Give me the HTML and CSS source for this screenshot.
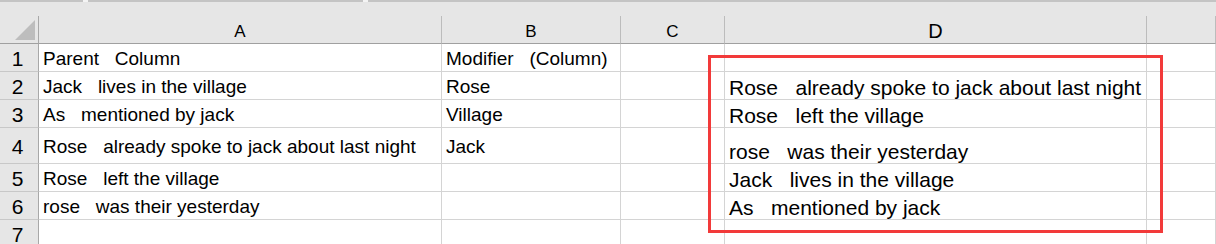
FILE: index.html
```html
<!DOCTYPE html>
<html>
<head>
<meta charset="utf-8">
<link rel="stylesheet" href="styles.css">
</head>
<body>
<div class="sheet">
  <div class="topbar">
    <div class="rule">
      <span class="seg seg-a"></span>
      <span class="seg seg-b"></span>
      <span class="seg seg-c"></span>
    </div>
  </div>
  <div class="grid">
    <div class="corner">
      <svg width="38" height="27" viewBox="0 0 38 27"><polygon points="15,24 35,24 35,4" fill="#bdbdbd"/></svg>
    </div>
    <div class="colhead">A</div>
    <div class="colhead">B</div>
    <div class="colhead">C</div>
    <div class="colhead colhead-d">D</div>
    <div class="colhead"></div>

    <div class="rowhead">1</div>
    <div class="cell">Parent   Column</div>
    <div class="cell">Modifier   (Column)</div>
    <div class="cell"></div>
    <div class="cell cell-d"></div>
    <div class="cell"></div>

    <div class="rowhead">2</div>
    <div class="cell">Jack   lives in the village</div>
    <div class="cell">Rose</div>
    <div class="cell"></div>
    <div class="cell cell-d">Rose   already spoke to jack about last night</div>
    <div class="cell"></div>

    <div class="rowhead">3</div>
    <div class="cell">As   mentioned by jack</div>
    <div class="cell">Village</div>
    <div class="cell"></div>
    <div class="cell cell-d">Rose   left the village</div>
    <div class="cell"></div>

    <div class="rowhead">4</div>
    <div class="cell">Rose   already spoke to jack about last night</div>
    <div class="cell">Jack</div>
    <div class="cell"></div>
    <div class="cell cell-d">rose   was their yesterday</div>
    <div class="cell"></div>

    <div class="rowhead">5</div>
    <div class="cell">Rose   left the village</div>
    <div class="cell"></div>
    <div class="cell"></div>
    <div class="cell cell-d">Jack   lives in the village</div>
    <div class="cell"></div>

    <div class="rowhead">6</div>
    <div class="cell">rose   was their yesterday</div>
    <div class="cell"></div>
    <div class="cell"></div>
    <div class="cell cell-d">As   mentioned by jack</div>
    <div class="cell"></div>

    <div class="rowhead">7</div>
    <div class="cell"></div>
    <div class="cell"></div>
    <div class="cell"></div>
    <div class="cell cell-d"></div>
    <div class="cell"></div>
  </div>
  <div class="highlight"></div>
</div>
</body>
</html>
```
FILE: styles.css
```css
* {
  box-sizing: border-box;
}

html, body {
  margin: 0;
  padding: 0;
  background: #ffffff;
}

body {
  width: 1216px;
  height: 244px;
  overflow: hidden;
  font-family: "Liberation Sans", Arial, sans-serif;
  color: #000000;
}

.sheet {
  position: relative;
  width: 1216px;
  height: 244px;
  overflow: hidden;
}

.topbar {
  height: 16px;
  background: #e6e6e6;
}

.rule {
  display: flex;
  gap: 5px;
  height: 2px;
  background: #f4f4f4;
}

.seg {
  display: block;
  height: 2px;
  background: #c4c4c4;
}

.seg-a { width: 83px; }
.seg-b { width: 275px; }
.seg-c { flex: 1; }

.grid {
  display: grid;
  grid-template-columns: 39px 403px 179px 104px 422px 1fr;
  grid-template-rows: 28px 28px 28px 28px 36px 28px 28px 28px;
}

.corner {
  background: #e6e6e6;
  border-right: 1px solid #a8a8a8;
  border-bottom: 1px solid #a0a0a0;
}

.corner svg {
  display: block;
}

.colhead {
  display: flex;
  align-items: center;
  justify-content: center;
  padding-top: 4px;
  background: #e6e6e6;
  border-right: 1px solid #bcbcbc;
  border-bottom: 1px solid #a0a0a0;
  font-size: 17px;
  line-height: 1;
}

.colhead-d {
  font-size: 20px;
  padding-top: 2px;
}

.rowhead {
  display: flex;
  align-items: center;
  justify-content: center;
  padding-top: 1px;
  padding-right: 3px;
  background: #e6e6e6;
  border-right: 1px solid #a8a8a8;
  border-bottom: 1px solid #c8c8c8;
  font-size: 21px;
  line-height: 1;
}

.cell {
  display: flex;
  align-items: center;
  padding: 2px 0 0 4px;
  border-right: 1px solid #d4d4d4;
  border-bottom: 1px solid #d4d4d4;
  font-size: 19px;
  line-height: 1;
  white-space: pre;
  overflow: hidden;
}

.cell-d {
  align-items: flex-end;
  padding: 0 0 1px 4px;
  font-size: 21px;
}

.highlight {
  position: absolute;
  left: 708px;
  top: 55px;
  width: 455px;
  height: 178px;
  border: 3px solid #f23a3a;
}
```
